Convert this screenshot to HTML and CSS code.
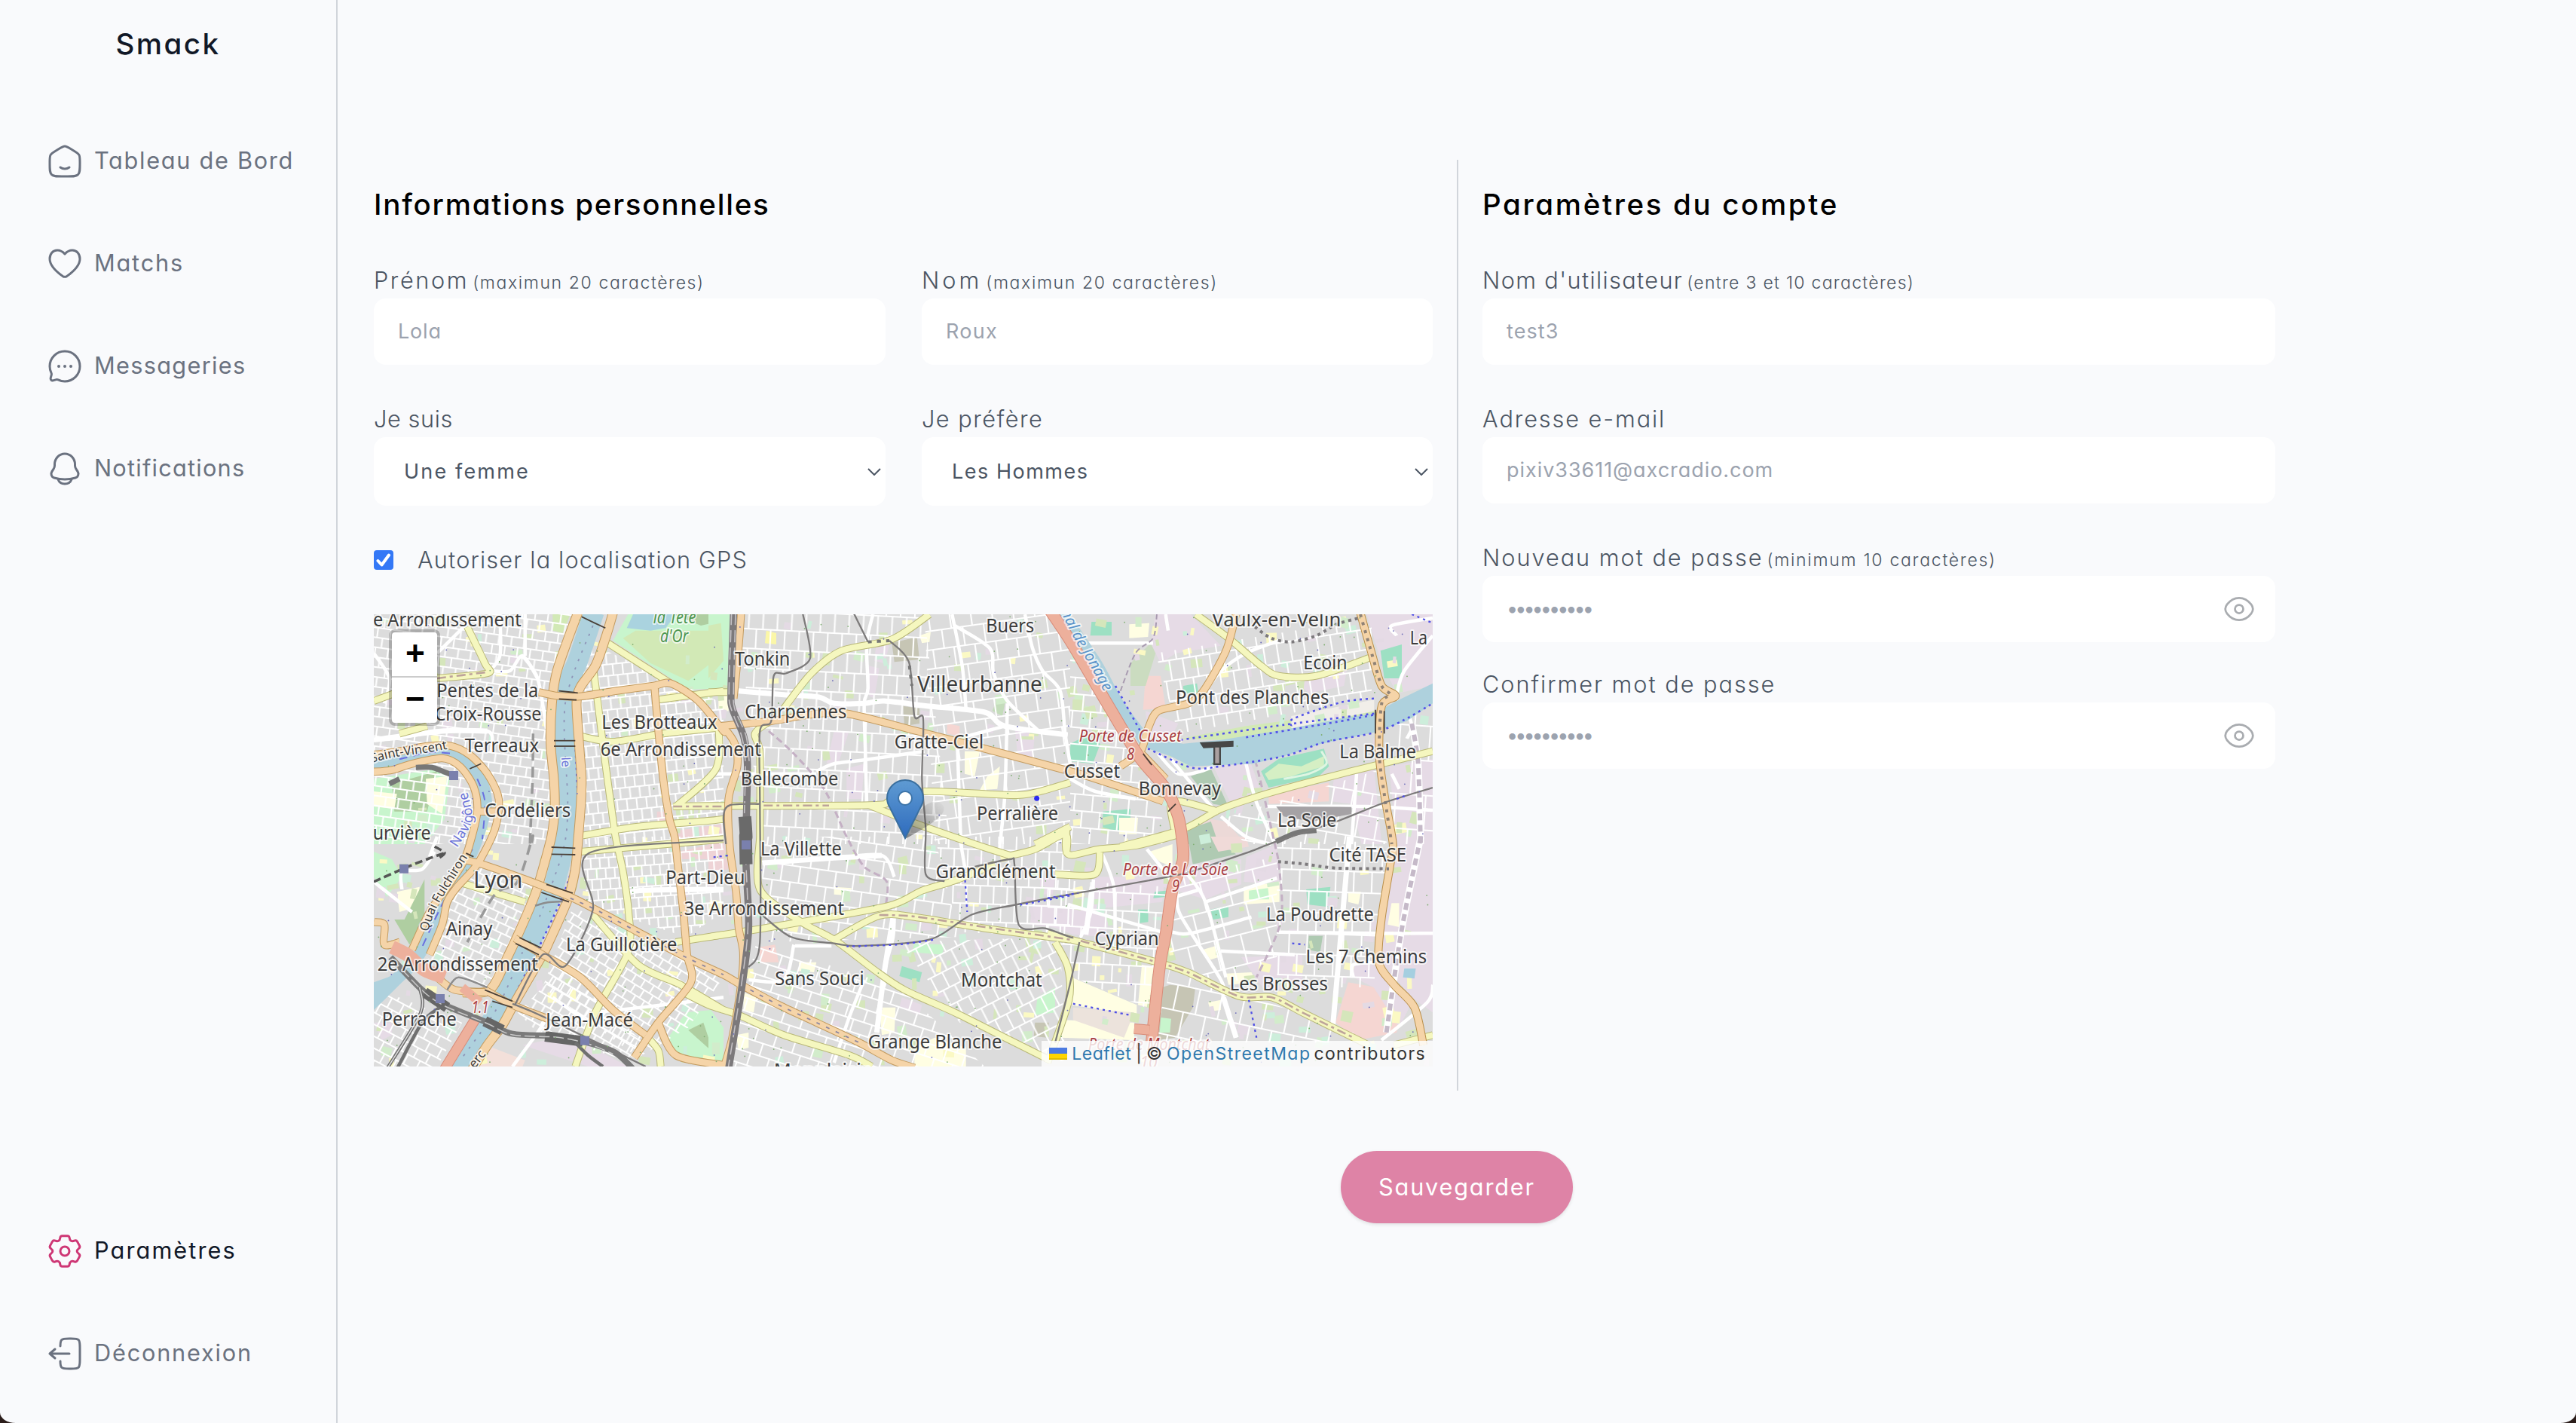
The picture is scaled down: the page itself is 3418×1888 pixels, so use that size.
FILE: index.html
```html
<!DOCTYPE html>
<html lang="fr">
<head>
<meta charset="utf-8">
<title>Smack</title>
<link rel="stylesheet" href="styles.css">
</head>
<body>
<div class="app">
  <aside class="sidebar">
    <div class="logo">Smack</div>
    <nav class="nav">
      <a class="nav-item"><svg class="icon" viewBox="0 0 24 24"><path d="M2 12.2c0-2.29 0-3.43.52-4.38.52-.95 1.47-1.54 3.36-2.71l2-1.24C9.89 2.62 10.89 2 12 2c1.11 0 2.11.62 4.12 1.87l2 1.24c1.9 1.17 2.84 1.76 3.36 2.71.52.95.52 2.09.52 4.38v1.52c0 3.9 0 5.85-1.17 7.07C19.66 22 17.77 22 14 22h-4c-3.77 0-5.66 0-6.83-1.21C2 19.57 2 17.62 2 13.72z"/><path d="M9 16c.85.63 1.89 1 3 1s2.15-.37 3-1"/></svg><span class="t1">Tableau de Bord</span></a>
      <a class="nav-item"><svg class="icon" viewBox="0 0 24 24"><path d="M12 5.5C10.6 3.9 8.8 3 7 3 4.100 3 2 5.400 2 8.700c0 4.900 4.700 8.700 8.600 11.500.9.600 1.900.600 2.800 0C17.300 17.400 22 13.600 22 8.700 22 5.400 19.900 3 17 3c-1.800 0-3.600.9-5 2.500z"/></svg><span class="t2">Matchs</span></a>
      <a class="nav-item"><svg class="icon" viewBox="0 0 24 24"><path d="M12 22c5.520 0 10-4.480 10-10S17.520 2 12 2 2 6.480 2 12c0 1.600.38 3.110 1.040 4.450.18.360.24.770.14 1.150l-.6 2.230c-.26.970.63 1.850 1.590 1.590l2.230-.6c.39-.1.800-.04 1.150.14C8.890 21.620 10.400 22 12 22z"/><path class="dots" d="M8 12h.01M12 12h.01M16 12h.01"/></svg><span class="t3">Messageries</span></a>
      <a class="nav-item"><svg class="icon" viewBox="0 0 24 24"><path d="M18.750 9.710V9C18.750 5.140 15.730 2 12 2S5.250 5.140 5.250 9v.71c0 .840-.24 1.670-.69 2.370L3.450 13.810c-1.010 1.580-.24 3.720 1.520 4.220a25.800 25.800 0 0 0 14.060 0c1.760-.5 2.530-2.640 1.520-4.220l-1.110-1.730a4.400 4.400 0 0 1-.69-2.370z"/><path d="M7.500 19c.65 1.750 2.420 3 4.500 3s3.850-1.250 4.500-3"/></svg><span class="t4">Notifications</span></a>
    </nav>
    <nav class="nav nav-bottom">
      <a class="nav-item active"><svg class="icon" viewBox="-12 -12 24 24"><path d="M-1.700-10.100H1.700C2.600-10.100 3-9.600 3.100-8.800 3.200-7 4.600-6.100 6.300-6.900 7.200-7.300 7.900-7 8.300-6.300L9.700-3.700C10.100-3 9.900-2.200 9.200-1.700 7.700-.6 7.700.6 9.200 1.700 9.900 2.200 10.100 3 9.700 3.700L8.300 6.300C7.900 7 7.200 7.300 6.300 6.900 4.600 6.100 3.200 7 3.100 8.800 3 9.600 2.600 10.100 1.700 10.100H-1.700C-2.600 10.100-3 9.600-3.100 8.800-3.200 7-4.600 6.100-6.300 6.900-7.200 7.300-7.900 7-8.300 6.300L-9.700 3.700C-10.100 3-9.900 2.200-9.200 1.700-7.700.6-7.700-.6-9.200-1.700-9.900-2.200-10.100-3-9.700-3.700L-8.300-6.300C-7.900-7-7.200-7.300-6.300-6.900-4.600-6.100-3.200-7-3.100-8.800-3-9.600-2.600-10.100-1.700-10.100z"/><circle r="3"/></svg><span class="t5">Paramètres</span></a>
      <a class="nav-item"><svg class="icon" viewBox="0 0 24 24"><path d="M9 7c.01-2.170.11-3.350.88-4.120C10.760 2 12.170 2 15 2h1c2.830 0 4.240 0 5.120.88C22 3.760 22 5.170 22 8v8c0 2.830 0 4.240-.88 5.120C20.240 22 18.830 22 16 22h-1c-2.830 0-4.240 0-5.120-.88C9.110 20.350 9.010 19.170 9 17"/><path d="M15 12H2M5.500 9 2 12l3.500 3"/></svg><span class="t6">Déconnexion</span></a>
    </nav>
  </aside>
  <main class="main">
    <div class="panels">
      <section class="panel personal">
        <h2><span class="t7">Informations personnelles</span></h2>
        <div class="pair">
          <label class="field"><span class="label"><span class="t8">Prénom</span><small class="t9">(maximun 20 caractères)</small></span><span class="box"><input class="t10" placeholder="Lola"></span></label>
          <label class="field"><span class="label"><span class="t11">Nom</span><small class="t9">(maximun 20 caractères)</small></span><span class="box"><input class="t12" placeholder="Roux"></span></label>
        </div>
        <div class="pair">
          <div class="field"><span class="label"><span class="t13">Je suis</span></span><span class="box select"><span class="t14">Une femme</span><svg class="chevron" viewBox="0 0 18 10"><path d="M1 1l8 8 8-8"/></svg></span></div>
          <div class="field"><span class="label"><span class="t15">Je préfère</span></span><span class="box select"><span class="t16">Les Hommes</span><svg class="chevron" viewBox="0 0 18 10"><path d="M1 1l8 8 8-8"/></svg></span></div>
        </div>
        <div class="gps"><span class="check"><svg viewBox="0 0 26 26"><path d="M5.500 14l5 5.500L20 6.500"/></svg></span><span class="t17">Autoriser la localisation GPS</span></div>
        <div class="map">
          <svg class="tiles" id="tiles" viewBox="496 815 1405 600"></svg>
          <div class="zoomctl"><span>+</span><span>−</span></div>
          <svg class="marker" viewBox="0 0 50 80"><defs><linearGradient id="pin" x2="0" y2="1"><stop offset="0" stop-color="#5f9bd3"/><stop offset="1" stop-color="#2e6bbd"/></linearGradient></defs><path fill="url(#pin)" stroke="#3a6f9f" stroke-width="2" d="M25 78L5 38C2 33 1 30 1 25a24 24 0 0 1 48 0c0 5-1 8-4 13z"/><circle cx="25" cy="25" r="9" fill="#fff" stroke="#3d74a8" stroke-width="2"/></svg>
          <div class="credit"><svg class="flag" viewBox="0 0 24 16"><path fill="#4c7be1" d="M0 0h24v8H0z"/><path fill="#ffd500" d="M0 8h24v6H0z"/><path fill="#e0bc00" d="M0 14h24v2H0z"/></svg><a class="t18">Leaflet</a><span>|</span><span>©</span><a class="t19">OpenStreetMap</a><span class="t20">contributors</span></div>
        </div>
      </section>
      <section class="panel account">
        <h2><span class="t21">Paramètres du compte</span></h2>
        <label class="field"><span class="label"><span class="t22">Nom d'utilisateur</span><small class="t23">(entre 3 et 10 caractères)</small></span><span class="box"><input class="t24" placeholder="test3"></span></label>
        <label class="field"><span class="label"><span class="t25">Adresse e-mail</span></span><span class="box"><input class="t26" placeholder="pixiv33611@axcradio.com"></span></label>
        <label class="field"><span class="label"><span class="t27">Nouveau mot de passe</span><small class="t28">(minimum 10 caractères)</small></span><span class="box"><input class="bullets" placeholder="••••••••••"><svg class="eye" viewBox="0 0 24 24"><path d="M3.280 15.300C2.420 14.190 2 13.640 2 12s.42-2.190 1.280-3.300C4.970 6.500 7.820 4 12 4s7.030 2.500 8.720 4.700C21.580 9.810 22 10.360 22 12s-.42 2.190-1.280 3.300C19.030 17.500 16.180 20 12 20s-7.030-2.500-8.720-4.700z"/><circle cx="12" cy="12" r="3"/></svg></span></label>
        <label class="field tight"><span class="label"><span class="t29">Confirmer mot de passe</span></span><span class="box"><input class="bullets" placeholder="••••••••••"><svg class="eye" viewBox="0 0 24 24"><path d="M3.280 15.300C2.420 14.190 2 13.640 2 12s.42-2.190 1.280-3.300C4.970 6.500 7.820 4 12 4s7.030 2.500 8.720 4.700C21.580 9.810 22 10.360 22 12s-.42 2.190-1.280 3.300C19.030 17.500 16.180 20 12 20s-7.030-2.500-8.720-4.700z"/><circle cx="12" cy="12" r="3"/></svg></span></label>
      </section>
    </div>
    <button class="save"><span class="t30">Sauvegarder</span></button>
  </main>
</div>
<script src="map.js"></script>
</body>
</html>
```
FILE: styles.css
```css
* { box-sizing: border-box; }
body {
  margin: 0;
  background: #2b1d1a;
  font-family: Inter, "Open Sans", sans-serif;
  font-feature-settings: "cv11";
  color: #4b5563;
}
.app {
  display: flex;
  height: 1888px;
  background: #f9fafc;
  border-radius: 0 0 21px 21px / 0 0 14px 14px;
  overflow: hidden;
}
.sidebar {
  width: 448px;
  flex: none;
  display: flex;
  flex-direction: column;
  border-right: 2px solid #d1d5db;
  padding-bottom: 68px;
}
.logo {
  height: 116px;
  line-height: 116px;
  text-align: center;
  font-size: 38.500px;
  font-weight: 450;
  letter-spacing: 2.500px;
  color: #111827;
  margin-bottom: 74px;
}
.nav { display: flex; flex-direction: column; gap: 88px; padding-left: 62px; }
.nav-bottom { margin-top: auto; }
.nav-item { display: flex; align-items: center; gap: 16px; height: 48px; font-size: 30.700px; color: #6b7280; white-space: nowrap; }
.nav-item span { padding-bottom: 3px; margin-left: -1px; }
.nav-item.active { color: #111827; }
.nav-item.active .icon { stroke: #ce3775; }
.icon { width: 48px; height: 48px; fill: none; stroke: #6b7280; stroke-width: 1.500; stroke-linecap: round; stroke-linejoin: round; }
.icon .dots { stroke-width: 2; }

.main { flex: 1; display: flex; flex-direction: column; align-items: center; padding-top: 212px; }
.panels { display: flex; align-self: stretch; height: 1235px; }
.panel { display: flex; flex-direction: column; padding-top: 32px; }
.personal { width: 1487px; border-right: 2px solid #d1d5db; padding-left: 48px; padding-right: 32px; }
.account { width: 1084px; padding-left: 32px; }
h2 { margin: 0; height: 56px; line-height: 55px; font-size: 38.500px; font-weight: 450; color: #000; white-space: nowrap; }
.pair { display: grid; grid-template-columns: 679px 678px; gap: 48px; }
.field { display: flex; flex-direction: column; margin-top: 48px; }
.field.tight { margin-top: 32px; }
.label { height: 48px; line-height: 48px; font-size: 30.700px; font-weight: 300; white-space: nowrap; }
.label small { font-size: 23px; margin-left: 5px; }
.box { display: flex; align-items: center; height: 88px; background: #fff; border-radius: 16px; padding-left: 32px; font-size: 27px; }
.box input { flex: 1; border: 0; padding: 0 0 2px; outline: 0; background: none; font: inherit; font-feature-settings: inherit; }
.box input::placeholder { color: #9ca3af; opacity: 1; }
.box.select { height: 91px; padding-left: 40px; padding-right: 6px; justify-content: space-between; }
.chevron { width: 18px; height: 10px; fill: none; stroke: #4b5563; stroke-width: 2; }
.eye { width: 44px; height: 44px; margin-right: 26px; fill: none; stroke: #a9acb0; stroke-width: 1.500; }
.gps { display: flex; align-items: center; height: 48px; margin: 48px 0; font-size: 30.700px; font-weight: 300; gap: 32px; white-space: nowrap; }
.gps .t17 { padding-bottom: 2px; }
.check { width: 26px; height: 26px; border-radius: 4px; background: #3478f6; }
.check svg { display: block; fill: none; stroke: #fff; stroke-width: 4; stroke-linecap: round; stroke-linejoin: round; }
.save { margin-top: 80px; width: 308px; height: 96px; border: 0; padding: 0 0 2px; border-radius: 48px; background: #de83a6; color: #fff; font: 400 30.700px Inter, sans-serif; font-feature-settings: inherit; box-shadow: 0 2px 4px rgba(0, 0, 0, .1); }

/* tracking of the individual labels */
.t1 { letter-spacing: 1.700px; }
.t2, .t6, .t30 { letter-spacing: 1.800px; }
.t3 { letter-spacing: 1.310px; }
.t4 { letter-spacing: 1.240px; }
.t5 { letter-spacing: 2.080px; }
.t7 { letter-spacing: 1.780px; }
.t8 { letter-spacing: 2.590px; }
.t9 { letter-spacing: 1.620px; }
.t10 { letter-spacing: .83px; }
.t11 { letter-spacing: 4px; }
.t12 { letter-spacing: 1.290px; }
.t13 { letter-spacing: .6px; }
.t14 { letter-spacing: 2.170px; }
.t15 { letter-spacing: 1.470px; }
.t16 { letter-spacing: 1.510px; }
.t17 { letter-spacing: 1.170px; }
.t18 { letter-spacing: .5px; }
.t19 { letter-spacing: 1.460px; }
.t20 { letter-spacing: 1.360px; margin-left: -2px; }
.t21 { letter-spacing: 2.650px; }
.t22 { letter-spacing: 1.360px; }
.t23 { letter-spacing: 1.290px; }
.t24 { letter-spacing: 1.070px; }
.t25 { letter-spacing: 1.890px; }
.t26 { letter-spacing: .95px; }
.t27, .t29 { letter-spacing: 1.970px; }
.t28 { letter-spacing: 1.730px; }
.bullets { letter-spacing: -4px; }

.map { position: relative; width: 1405px; height: 600px; overflow: hidden; background: #dfdfdf; }
.tiles { display: block; width: 1405px; height: 600px; }
.tiles text { font-family: "Noto Sans", sans-serif; fill: #3c3c3c; stroke: #fff; stroke-opacity: .7; stroke-width: 4px; paint-order: stroke; stroke-linejoin: round; }
.tiles .red { fill: #a93d42; font-style: italic; }
.tiles .green { fill: #4d9650; font-style: italic; }
.tiles .blue { fill: #5b93c9; font-style: italic; }
.tiles .purple { fill: #6a72d8; }
.zoomctl { position: absolute; left: 20px; top: 20px; width: 68px; border: 4px solid rgba(0, 0, 0, .22); border-radius: 8px; background: #fff; background-clip: padding-box; }
.zoomctl span { display: block; height: 58px; padding-left: 2px; text-align: center; color: #000; font: 700 44px/63px "Liberation Mono", monospace; }
.zoomctl span + span { height: 62px; border-top: 2px solid #ccc; }
.marker { position: absolute; left: 680px; top: 219px; width: 50px; height: 80px; }
.credit { position: absolute; right: 0; bottom: 0; height: 34px; display: flex; align-items: center; gap: 6px; padding: 0 9px 0 10px; background: rgba(255, 255, 255, .8); font-size: 23px; color: #333; white-space: nowrap; }
.credit a { color: #2f79ae; }
.flag { width: 24px; height: 16px; }
```
FILE: map.js
```js
// Street map of Lyon: every shape is given in the units of one of six sheets.
const NS = 'http://www.w3.org/2000/svg';
const svg = document.getElementById('tiles');
const sheets = {
  A: [480, 800, 3, 3], B: [940, 800, 3, 3], C: [1420, 800, 3, 3],
  D: [480, 1110, 3, 3], E: [940, 1110, 3, 3], F: [1390, 1110, 2.958, 3]
};
function pt(s, x, y) { const k = sheets[s]; return [k[0] + x / k[2], k[1] + y / k[3]]; }
// "A 1,2 3,4 D 5,6" -> list of map points
function pts(str) {
  let s = 'A'; const out = [];
  for (const w of str.trim().split(/\s+/)) {
    if (w.length === 1) s = w; else { const [x, y] = w.split(',').map(Number); out.push(pt(s, x, y)); }
  }
  return out;
}
function el(name, attrs, parent = svg) {
  const e = document.createElementNS(NS, name);
  for (const k in attrs) e.setAttribute(k, attrs[k]);
  parent.appendChild(e); return e;
}
const f = n => n.toFixed(1);
function smooth(p) {
  let d = `M${f(p[0][0])} ${f(p[0][1])}`;
  for (let i = 0; i < p.length - 1; i++) {
    const a = p[i - 1] || p[i], b = p[i], c = p[i + 1], e = p[i + 2] || c, t = 7;
    d += `C${f(b[0] + (c[0] - a[0]) / t)} ${f(b[1] + (c[1] - a[1]) / t)} ${f(c[0] - (e[0] - b[0]) / t)} ${f(c[1] - (e[1] - b[1]) / t)} ${f(c[0])} ${f(c[1])}`;
  }
  return d;
}
function lines(list, color, width, extra = {}) {
  for (const l of list) el('path', { d: smooth(pts(l)), fill: 'none', stroke: color, 'stroke-width': width, 'stroke-linejoin': 'round', ...extra });
}
function area(str, fill, extra = {}) { el('polygon', { points: pts(str).map(p => p.map(f).join()).join(' '), fill, ...extra }); }

let seed = 7;
const rnd = () => (seed = (seed * 16807) % 2147483647) / 2147483647;

// background and land use
el('rect', { x: 496, y: 815, width: 1405, height: 600, fill: '#dcdcdc' });
const mauve = '#e6dbe6', park = '#c8f5cd', grass = '#d2e9b6', wood = '#afcea1', school = '#fffee3', pitch = '#9de0c3', pink = '#f5d6d2', brown = '#c6c5b4';
[
  ['A 1000,150 1060,45 1440,45 1440,340 1300,345', park], ['A 1040,140 1090,110 1440,110 1440,200 1300,310 1150,240', grass],
  ['A 1240,45 1440,45 1440,70 1350,90', wood], ['A 1055,100 1080,45 1250,45 1210,100 1150,110', '#aad3df'],
  ['B 0,45 85,45 75,340 0,345', park], ['B 0,90 50,80 60,230 0,300', grass],
  ['A 760,45 830,45 800,120 760,110', grass], ['A 48,700 300,660 350,700 330,860 250,960 48,960', park],
  ['A 120,720 300,670 260,830 130,830', wood], ['A 255,700 340,690 320,840 260,800', school], ['A 48,750 140,760 130,820 48,810', school],
  ['D 48,60 120,90 160,160 100,240 48,160', park], ['D 140,220 230,200 220,280 150,300', school], ['D 170,330 250,170 250,330 190,430 130,330', wood],
  ['D 1220,800 1290,700 1390,690 1440,760 1440,900 1260,870', park], ['D 1300,770 1360,740 1400,860', wood],
  ['D 640,830 780,800 920,840 1060,915 900,915', mauve], ['D 470,880 520,840 650,890 640,915 450,915', '#f3e0da'],
  ['D 48,740 120,740 120,790 80,810', mauve], ['D 1260,60 1440,20 1440,130 1390,120 1380,90 1270,90', '#eed3d6'],
  ['A 1260,905 1440,880 1440,920 1260,940', '#eed3d6'], ['A 1175,830 1210,830 1210,880 1175,870', '#eed3d6'],
  ['E 0,20 60,10 80,130 0,140', '#eed3d6'], ['B 730,160 830,135 840,225 740,235', brown], ['B 775,410 840,420 840,480 780,490', brown],
  ['B 1110,690 1160,650 1150,740 1080,745', school], ['B 1020,590 1080,590 1060,690 1020,680', school], ['B 1220,500 1300,510 1290,620 1230,600', mauve],
  ['B 500,510 560,510 520,630 470,640', mauve], ['B 550,660 620,640 610,780 550,780', mauve], ['B 640,250 680,260 660,380 640,370', mauve], ['B 670,150 720,170 700,240 660,230', mauve],
  ['B 950,480 1000,490 1000,530 950,520', pink], ['B 840,130 885,115 880,155 850,160', school], ['B 1150,380 1180,400 1170,450 1130,430', '#c4dcbb'],
  ['B 230,110 270,120 270,165 225,160', '#fbf7a8'], ['B 40,370 80,370 80,430 40,430', school],
  ['C 340,45 480,45 600,170 420,200 360,240 320,160', mauve], ['C 1180,45 1443,45 1443,330 1300,360 1240,240', mauve],
  ['C 900,310 1100,270 1090,330 950,360', mauve], ['C 300,290 360,290 380,420 290,425', pink], ['C 300,430 430,480 400,540 310,530', mauve],
  ['C 240,240 320,160 340,200 300,330 240,330', '#cbdcc0'], ['C 85,75 165,75 165,130 80,130', pitch], ['C 235,85 315,80 310,135 235,140', school],
  ['C 450,330 505,320 510,360 450,360', pitch], ['C 1235,190 1320,165 1320,300 1250,300', pitch], ['C 440,540 700,490 1000,450 1200,420 1220,440 900,500 600,545', grass],
  ['C 480,690 560,660 630,810 570,800', '#afcab2'], ['C 570,650 720,640 760,750 640,800', mauve], ['C 790,770 950,730 1030,715 1030,790 790,800', pink],
  ['C 1050,690 1210,660 1240,960 1160,960 1120,800 1040,790', mauve], ['C 1270,650 1443,620 1443,960 1300,960', mauve],
  ['C 130,830 240,820 240,910 130,900', pitch], ['C 195,855 270,855 265,920 195,920', school], ['C 0,560 60,530 120,560 90,640 0,630', pitch],
  ['C 880,450 1210,385 1210,430 880,500', '#f1eee9'], ['C 470,910 560,860 620,870 700,960 470,960', '#ecd9d7'], ['C 470,900 560,870 590,960 450,960', '#afcab2'],
  ['F 550,0 640,0 740,70 570,110', '#afcab2'], ['F 640,0 780,0 790,40 670,60', '#f0dad8'], ['F 420,190 480,120 760,90 760,190 620,250', mauve],
  ['F 180,160 460,160 450,260 160,290', mauve], ['F 400,60 490,30 490,120 440,100', school], ['F 0,270 160,290 240,320 230,400 100,390 0,350', mauve],
  ['F 780,80 900,30 910,190 770,180', mauve], ['F 770,200 910,180 910,260 770,270', school], ['F 790,215 865,205 870,250 790,250', park],
  ['F 1015,210 1110,200 1100,280 1020,270', pitch], ['F 1180,220 1230,220 1220,270 1180,260', school], ['F 1370,0 1512,0 1512,700 1430,640 1310,500 1320,330', mauve],
  ['F 1350,265 1380,265 1380,360 1335,350', school], ['F 760,480 1000,470 1000,610 850,610', mauve], ['F 1180,580 1290,600 1380,700 1370,780 1220,810 1130,740', pink],
  ['F 1190,510 1290,510 1430,660 1380,760 1280,600 1200,560', mauve], ['F 1025,395 1080,395 1070,460 1020,450', '#afcab2'],
  ['F 420,220 465,215 460,240 415,245', pitch], ['F 355,290 395,290 395,340 355,345', pitch], ['F 640,290 710,275 710,320 650,330', pitch],
  ['F 95,560 350,670 350,710 90,670', school], ['F 370,510 425,520 400,680 355,670', school], ['F 60,730 340,740 340,810 50,800', school],
  ['F 480,590 580,600 570,680 500,800 430,810 450,600', brown], ['F 100,680 340,700 300,800 100,730', '#ece3dc'], ['F 445,720 485,725 480,780 440,780', park],
  ['F 700,545 800,540 820,580 710,590', school], ['F 610,450 660,435 670,480 640,490', school], ['F 630,660 680,650 680,690 640,695', school],
  ['E 820,840 900,800 1025,840 1025,915 820,915', school], ['E 680,680 745,680 740,780 690,790', school], ['E 770,640 850,670 840,710 760,680', mauve],
  ['E 770,515 850,540 840,580 760,555', pitch], ['E 820,425 940,430 930,470 810,460', park], ['E 1310,640 1380,600 1380,700 1300,710', park], ['E 1300,740 1355,740 1350,800 1295,795', brown],
  ['E 200,440 265,430 280,500 210,500', pink], ['E 140,620 190,640 180,700 140,690', school], ['E 360,500 430,500 420,540 360,535', school], ['E 500,200 570,205 560,235 500,230', school],
  ['E 110,790 160,780 160,840 120,850', school], ['E 0,740 60,800 50,900 0,900', park], ['E 1290,270 1360,270 1440,300 1440,370 1280,350', mauve], ['E 1320,160 1380,170 1370,230 1320,230', mauve]
].forEach(a => area(a[0], a[1]));

// scattered gardens, yards and squares
const tones = ['#d5e6bb', '#d5e6bb', '#d2eccb', '#fbf9c4', '#e4dae4', '#cdeedb'];
for (let i = 0; i < 640; i++) {
  const x = 500 + rnd() * 1390, y = 818 + rnd() * 590, w = 4 + rnd() * 12, h = 4 + rnd() * 12;
  el('rect', { x: f(x), y: f(y), width: f(w), height: f(h), fill: tones[i % 6], transform: `rotate(${f(rnd() * 30 - 15)} ${f(x)} ${f(y)})` });
}

// side streets, one grid per district
const defs = el('defs', {});
[
  ['A 48,45 850,45 740,400 760,800 740,960 48,960', 8, 17, 13], ['A 860,140 1440,400 1440,960 880,960', -6, 13, 15],
  ['D 440,110 700,190 500,610 240,470', 25, 15, 12], ['D 860,0 1440,0 1440,300 1290,400 900,270', -4, 12, 14], ['D 840,280 1440,560 1300,760 1100,880 720,600', 32, 14, 12],
  ['D 620,700 800,520 1100,800 1080,900 700,780', 30, 13, 13], ['D 48,600 400,740 300,915 48,915', 28, 18, 14],
  ['B 120,45 860,45 960,960 210,960', 3, 19, 26], ['B 860,45 1440,45 1440,960 900,960', -8, 28, 25],
  ['E 210,0 900,0 1000,400 220,420', 8, 24, 22], ['E 190,420 760,600 1100,915 90,915', 18, 26, 17], ['E 760,420 1400,400 1420,900 1000,740', -27, 17, 22], ['E 900,0 1440,0 1440,400 1000,380', 2, 18, 24],
  ['C 0,170 290,620 400,960 0,960', 5, 24, 22], ['C 340,200 1200,60 1200,380 430,520', -9, 18, 27], ['C 600,860 1240,660 1260,960 700,960', 10, 26, 30], ['C 1260,430 1443,380 1443,960 1280,960', 4, 40, 46],
  ['F 0,170 480,200 430,700 100,560 0,400', 3, 22, 24], ['F 500,160 900,80 900,480 700,600 480,480', -14, 36, 40], ['F 900,20 1340,20 1280,600 900,600', 2, 24, 28], ['F 480,520 1200,780 1200,820 420,820', 12, 30, 34]
].forEach((g, i) => {
  const p = el('pattern', { id: 'grid' + i, width: g[2], height: g[3] * 2, patternUnits: 'userSpaceOnUse', patternTransform: `rotate(${g[1]})` }, defs);
  el('path', { d: `M0 1H${g[2]}M0 ${g[3] + 1}H${g[2]}M1 0V${g[3]}M${g[2] / 2} ${g[3]}V${g[3] * 2}`, stroke: '#fff', 'stroke-width': 2.100, fill: 'none' }, p);
  area(g[0], `url(#grid${i})`);
});

// secondary streets
lines([
  'A 48,545 130,540 320,510 500,510 520,560', 'A 550,45 550,210 500,280', 'A 300,200 420,80 440,45', 'A 48,200 110,300 90,400', 'A 520,270 590,270 640,210 700,300', 'A 650,45 650,210', 'A 640,210 700,300 735,500',
  'B 120,350 300,365 440,375 500,400 620,400 700,390 870,410 1100,435 1180,490 1430,525', 'B 655,45 630,160 635,340 620,400 625,600 630,800', 'B 970,45 1010,250 1025,420', 'B 980,90 1120,180 1135,280 1190,390 1310,505', 'B 1260,45 1290,180 1330,270 1400,350 1420,520 1440,640', 'B 430,670 500,640 620,625 860,590', 'B 1180,490 1030,530', 'B 1190,400 1180,760 1160,960', 'B 990,540 1005,960', 'B 0,680 430,680',
  'E 215,105 500,85 690,75 740,160', 'E 740,290 735,400 700,540 670,780', 'E 340,430 300,570 160,570', 'E 620,570 560,720 500,900', 'E 345,435 490,435', 'E 1160,0 1160,70',
  'E 1000,0 1020,120', 'D 1060,240 1100,215 1440,210', 'D 930,700 1200,670 1440,640', 'D 760,640 900,740', 'D 600,915 700,780 750,700', 'D 48,180 200,300', 'D 270,80 300,0', 'D 290,60 240,130 160,140 160,210',
  'C 0,700 100,750 260,780', 'C 30,160 330,160', 'C 380,45 390,110', 'C 600,850 700,930 800,960', 'C 700,640 740,790 810,950', 'C 1300,390 1330,410 1360,490 1340,540', 'C 1140,680 1120,960', 'C 780,810 1180,810 1443,825', 'C 1300,360 1330,270 1443,130', 'C 540,350 600,270 700,200 830,150', 'C 350,600 430,680 520,670 570,650', 'C 400,620 500,740 580,830', 'C 1443,60 1280,90 1300,130', 'C 1280,680 1310,740',
  'F 180,170 170,300 130,400', 'F 215,70 260,200 265,400', 'F 390,50 500,200 520,310 680,570 690,640 740,800', 'F 540,140 620,260 700,560', 'F 490,380 560,385 800,320', 'F 680,455 970,470', 'F 900,380 1290,385 1512,385', 'F 1185,0 1170,200 1140,520 1120,750', 'F 500,240 600,210', 'F 620,260 900,165', 'F 1300,500 1200,510 1200,560', 'F 1512,590 1490,660 1310,810', 'F 80,270 450,380'
], '#fff', 4.500);
lines(['B 120,350 300,365 440,375 500,400 620,400 700,390 870,410 1100,435 1180,490 1430,525', 'F 175,200 150,390', 'E 215,105 500,85 690,75', 'E 740,290 700,540 670,780', 'F 690,640 740,800', 'F 1185,0 1140,520 1120,750', 'D 1060,240 1100,215 1440,210', 'A 48,545 320,510 500,510'], '#fff', 7);

// administrative limits
lines(['B 240,510 340,600 460,740 550,930 E 620,120 710,180 700,310', 'C 700,550 740,640 810,940 F 910,130 915,340 820,560'], '#c4b0c4', 3, { 'stroke-dasharray': '9 5' });
lines(['C 1360,480 1385,640 1395,960', 'F 1465,0 1390,370 1330,780'], '#fff', 9);
lines(['C 1360,480 1385,640 1395,960', 'F 1465,0 1390,370 1330,780'], '#c5b9c8', 6, { 'stroke-dasharray': '9 6' });

// water
const water = '#aed1dd';
lines(['A 925,35 860,230 815,345 810,540 820,700 818,880 D 808,0 795,80 755,230 680,400 600,570 560,660 500,760 420,860 370,930'], water, 27);
lines(['A 40,640 150,625 270,597 370,605 430,650 480,720 495,800 480,870 D 455,20 420,100 350,220 310,300 240,450 190,520 120,580 40,640'], water, 16);
area('D 48,580 160,540 170,570 100,640 48,690', water);
lines(['C -60,0 100,235 190,400 270,510 300,560'], water, 15);
area('C 270,530 450,560 600,545 850,505 1080,460 1210,440 1300,390 1443,320 1443,400 1340,470 1210,515 1000,560 850,610 730,640 600,645 480,650 400,610 310,580', water);
area('F 1400,525 1445,525 1440,565 1395,560', '#a5cfe0');
lines(['C 440,545 850,485 1210,440', 'C 310,580 480,655 600,650 850,610 1010,555 1215,515 1330,465 1443,400', 'C 700,535 1080,470 1210,445', 'C 880,490 890,460 1080,395 1210,380', 'C 180,330 290,530', 'A 850,560 860,800 850,960 D 830,150 790,260 710,430 600,650'], '#5252e8', 2.600, { 'stroke-dasharray': '3 5' });
lines(['A 920,90 810,400 820,800 D 800,60 700,340', 'D 640,460 540,680 400,880'], '#8e95b8', 1.800, { 'stroke-dasharray': '3 9' });
lines(['A 150,622 270,595 370,600', 'A 460,700 490,790 480,940', 'D 440,50 320,270 240,440'], '#6a70e0', 2, { 'stroke-dasharray': '11 8' });
area('C 760,670 830,620 1010,580 1030,650 990,690 790,735', pitch);
area('C 775,680 830,640 920,650 1010,610 1010,650 880,690 790,705', '#d5efc4');
lines(['C 850,700 950,680 1020,640 1000,590'], '#dff5e2', 3);
area('C 515,555 650,548 650,572 530,578', '#474747');
area('C 570,570 600,570 600,645 570,645', '#474747'); area('C 577,575 593,575 593,638 577,638', '#aaa0a0');

function roads(list, casing, fill, w) { lines(list, casing, w + 2); lines(list, fill, w); }
roads([
  'A 420,95 490,240 500,280 300,300', 'A 48,390 130,360', 'A 980,160 1230,320', 'A 920,250 940,400 970,640 1000,860 D 1010,0 1040,140 1062,300 1060,460 930,700 850,915', 'A 870,530 1000,552 1200,520 1440,495', 'A 1180,385 1440,350', 'A 880,925 1100,890 1370,868 1440,860', 'A 1420,480 1410,660 1250,810', 'A 1240,810 B 0,808 640,805 720,790 860,750 1200,765 1300,755 1440,715', 'A 150,520 260,490',
  'B 880,45 730,145 530,190 410,280 300,420', 'B 0,355 75,355', 'B 640,805 830,880 1060,960 E 1200,75', 'B 245,470 185,520 205,600 205,900 E 205,0 205,210 370,340 500,410 660,530 780,610 980,700 1200,810 1360,890', 'B 1300,960 1440,890', 'E 1190,78 1300,50 1420,-10 1425,70',
  'E 0,400 370,340 720,275 850,215 980,175 1140,110', 'E 500,410 680,315 820,320 1100,365 1440,410', 'E -100,620 0,670 120,710 300,790 560,870 650,915', 'E 1380,420 1430,520 1435,650 1350,900',
  'C 500,45 630,140 760,250 830,290 980,290 1200,215', 'C 200,970 450,900 600,820 780,760 1000,700 1240,640 1443,590', 'C 415,900 400,810 440,790 590,830',
  'D 400,185 650,260', 'D 870,60 1100,40 1440,10', 'D 920,310 1100,510 1270,590 1440,690', 'D 1250,420 1440,390', 'D 1130,790 1180,850 1190,915',
  'F 75,-40 80,70 200,50 350,35 520,-10', 'F 205,60 185,150 30,150', 'F 0,385 130,420 430,500 550,540 750,635 880,640 1000,700 1200,800 1260,830', 'F 1360,830 1512,790'
], '#b9b878', '#f5f7bf', 8);
lines(['E 680,312 820,318 1100,360 1440,410', 'F 130,415 430,500 550,540 750,635 880,640 1000,700 1200,800', 'B 220,806 480,806', 'A 1240,810 1440,810', 'A 300,300 500,275'], '#bda39a', 2.600, { 'stroke-dasharray': '12 5 4 5' });

roads([
  'A 860,40 815,160 775,280 757,400 752,560 765,700 768,820 D 755,0 715,150 690,230 640,350 580,480 510,610 400,620', 'A 1000,40 970,140 930,250 870,335 855,400 865,560 875,700 872,800 D 862,0 850,130 820,250 745,420 720,470 615,650 560,750 500,830 440,925'
], '#c39b5f', '#f5d4a8', 11);
roads([
  'A 40,672 120,665 200,640 320,618 390,650 445,730 460,830 430,960 D 400,110 340,200 270,300 200,450', 'A 40,605 150,590 260,570 350,568 430,605 500,680 545,780 530,900 D 460,110 380,200 340,260 320,350 270,470',
  'A 705,355 780,370 870,372 1010,350 1160,330 1230,320 1340,390 1440,510 B 60,495 105,560 115,650 80,780 E 85,40 110,220 120,360 138,460 130,590 95,800 60,925', 'A 1165,330 1180,500 1200,700 1225,860 D 1245,0 1260,130 1280,300 1295,470 1310,580 1180,740 1085,880', 'D 1180,740 1250,870 1440,910',
  'D 400,90 480,110 650,170 830,240 930,290 1100,380 1290,480 1440,550 E 130,590 280,670 430,740 600,820 730,890 820,920', 'D 610,405 720,470 870,560 1000,690 1130,790', 'D 490,610 600,670 740,725', 'D 48,340 90,350 90,430 150,420',
  'B 130,40 118,200 100,380', 'B 45,490 250,470 400,445 550,440 830,510 1100,580 1440,670 C 70,690 270,755 370,790', 'C 660,45 620,190 530,350 470,400 350,430 310,500 280,590 200,650', 'C 275,590 380,700', 'D 300,560 370,610 500,620', 'A 450,830 540,830'
], '#c39b5f', '#f5d4a8', 8.500);
roads(['C 1155,40 1200,200 1240,330 1295,370 1240,410 1230,600 1250,760 1285,960 F 1345,110 1310,330 1300,500 1360,590 1440,680 1475,830'], '#b98f4a', '#f5d4a8', 9);
lines(['C 1155,45 1200,200 1240,330 1275,365 1240,400 1230,600 1250,760 1280,960'], '#8f8276', 4, { 'stroke-dasharray': '4 7' });
lines(['D 830,245 930,290 1100,380 1290,480 1440,550', 'E 130,590 280,670 430,740 600,820'], '#8c86a0', 1.800, { 'stroke-dasharray': '5 9' });
roads(['B 1340,0 C 0,150 100,320 200,490 280,620 380,740 430,850 F 530,30 530,100 490,210 465,380 440,520 408,820'], '#d88b78', '#edb09c', 14);
roads(['F 340,765 400,770', 'D 450,730 330,925'], '#d88b78', '#edb09c', 12);
lines(['D 120,440 180,470 250,530 330,560'], '#edb09c', 18); lines(['D 400,600 470,660'], '#edb09c', 12);
lines(['A 875,55 970,100', 'A 765,548 850,548', 'A 765,570 850,570', 'A 785,350 860,358', 'A 785,382 855,386', 'D 755,42 850,46', 'D 755,70 850,72', 'D 735,190 840,225', 'D 715,222 825,260', 'D 628,402 715,443', 'D 612,425 705,470', 'D 415,66 445,80', 'D 490,610 600,655', 'D 520,655 600,680', 'C 1215,425 1215,520', 'C 1250,430 1250,520', 'A 430,660 475,640', 'C 290,600 325,645', 'C 390,830 420,800'], '#4a4038', 1.800);

// railways
lines(['B 100,40 90,350 95,420 140,530 155,640 150,900 E 150,0 150,120 160,370 130,620 80,925'], '#7c797b', 9.500);
lines(['B 92,40 82,350 90,420 132,530 147,640 142,900 E 150,120 157,370 127,620 78,925', 'B 108,40 100,350 104,420 150,530 163,640'], '#c4c1c4', 1.600, { 'stroke-dasharray': '16 7' });
lines(['B 145,850 150,930 E 148,0 150,110'], '#6a6a6a', 17);
lines(['D 115,480 240,610 330,670 500,740 600,785 780,795 900,820 1010,860 1080,925'], '#7a7a7a', 8);
lines(['D 250,620 340,680', 'D 490,735 560,770', 'D 730,795 880,815'], '#666', 14);
lines(['D 120,485 240,612 330,674 500,744 600,789 780,799 900,824 1000,865'], '#c9c9c9', 1.500, { 'stroke-dasharray': '14 5' });
lines(['D 230,600 235,700 100,925', 'D 310,680 240,740 140,925', 'D 850,820 900,870 960,915'], '#707070', 4.500);
lines(['D 230,600 235,700 100,925'], '#ddd', 1.500);
lines(['A 215,655 280,655 360,685', 'A 110,720 150,700', 'C 820,950 900,915 980,905'], '#777', 7);
area('C 820,810 1120,812 1120,840 960,870 850,850', '#a5a2a5');
lines(['A 682,520 680,700 670,960 D 680,0 620,180 530,230 420,420'], '#999', 3.500, { 'stroke-dasharray': '14 8' });
lines(['D 48,180 170,125 260,90 330,65', 'D 290,40 330,65 300,90'], '#555', 3.500, { 'stroke-dasharray': '10 5' });
lines(['D 690,275 740,262 800,258', 'D 340,610 385,560 500,600'], '#8c8c8c', 2.500);
lines([
  'B 375,40 405,220 310,280 260,290 250,470 205,510 205,800 E 205,420 160,520', 'B 70,960 60,850 85,805 205,800', 'B 578,40 635,155', 'B 720,150 798,235 820,450 855,460 850,700 865,900 E 865,150 940,178', 'E 1060,120 1200,90 1218,110 1235,350 1340,365 1440,400 F 100,400',
  'E 200,300 330,400 500,425 600,435 880,410 1050,310 1230,270 1440,230 F 500,155 620,120 780,65 C 820,950 1060,870 1250,795 1443,735', 'D 1440,15 905,65 920,290 810,515 720,470 610,670', 'D 600,665 730,720 1130,915', 'F 125,420 85,600 30,820'
], '#7c7a7a', 2.300);
lines(['B 635,155 720,150', 'B 800,250 810,330'], '#777', 4, { 'stroke-dasharray': '5 7' });
lines(['C 735,95 800,140 880,155 980,130 1060,85 1150,60', 'F 905,100 1000,108 1130,125 1340,128'], '#7d7a7d', 4, { 'stroke-dasharray': '4 5' });
lines(['C 345,45 330,140 260,200 200,350'], '#a89bb0', 2, { 'stroke-dasharray': '7 4' });
lines(['E 550,437 750,430 900,410', 'E 1240,272 1440,235', 'E 1020,150 1030,300', 'F 0,245 120,225', 'F 100,665 330,712', 'F 790,650 820,800', 'C 1300,780 1340,765', 'C 1360,45 1443,80', 'F 960,425 1010,430', 'E 20,82 80,75'], '#4f4fe5', 2.300, { 'stroke-dasharray': '3 5' });
['A 366,687', 'D 168,128', 'D 312,645', 'D 888,812', 'E 150,33'].forEach(s => { const p = pts(s)[0]; el('rect', { x: p[0] - 6, y: p[1] - 6, width: 12, height: 12, fill: '#7a80ad' }); });
{ const p = pts('B 1307,778')[0]; el('circle', { cx: p[0], cy: p[1], r: 3.500, fill: '#2d2df0' }); }
for (let i = 0; i < 420; i++) el('circle', { cx: f(500 + rnd() * 1395), cy: f(818 + rnd() * 592), r: 0.900, fill: i % 3 ? '#7fae72' : '#6a6ab8' });

// shadow cast by the marker
{
  const g = el('linearGradient', { id: 'shade', x1: 0, y1: 1, x2: 1, y2: 0 }, defs);
  el('stop', { offset: 0, 'stop-color': '#333', 'stop-opacity': .55 }, g);
  el('stop', { offset: 1, 'stop-color': '#333', 'stop-opacity': 0 }, g);
  el('path', { d: 'M1201 1113L1218 1080C1226 1064 1246 1058 1252 1070 1256 1080 1240 1092 1201 1113z', fill: 'url(#shade)' });
}

// place names: sheet, x start, x end, baseline, text, size, class
function name(s, x0, x1, y, text, size = 25, cls = '', end = s) {
  const a = pt(s, x0, y), b = pt(end, x1, y);
  el('text', { x: f(a[0]), y: f(a[1]), 'font-size': size, textLength: f(b[0] - a[0]), lengthAdjust: 'spacingAndGlyphs', class: cls }).textContent = text;
}
[
  ['A', 45, 635, 93, 'e Arrondissement'], ['A', 298, 703, 374, 'Pentes de la'], ['A', 290, 715, 468, 'Croix-Rousse'], ['A', 410, 705, 594, 'Terreaux'], ['A', 490, 832, 852, 'Cordeliers'], ['A', 44, 275, 942, 'urvière'],
  ['A', 955, 1415, 500, 'Les Brotteaux'], ['A', 950, 210, 610, '6e Arrondissement', 25, '', 'B'], ['A', 1160, 1330, 80, 'la Tête', 24, 'green'], ['A', 1188, 1300, 155, "d'Or", 24, 'green'],
  ['B', 832, 1328, 354, 'Villeurbanne', 29], ['B', 1105, 1297, 117, 'Buers'], ['B', 105, 325, 248, 'Tonkin'], ['B', 145, 550, 460, 'Charpennes'], ['B', 740, 1095, 578, 'Gratte-Ciel'], ['B', 128, 517, 726, 'Bellecombe'], ['B', 1068, 1392, 863, 'Perralière'],
  ['C', 565, 1078, 93, 'Vaulx-en-Velin'], ['C', 1352, 1422, 165, 'La'], ['C', 928, 1103, 265, 'Ecoin'], ['C', 420, 1030, 403, 'Pont des Planches'], ['C', 1072, 1377, 617, 'La Balme'], ['C', 272, 600, 765, 'Bonnevay'], ['C', 825, 1060, 890, 'La Soie'],
  ['C', 35, 443, 553, 'Porte de Cusset', 22, 'red'], ['C', 225, 255, 625, '8', 22, 'red'], ['C', -25, 198, 697, 'Cusset'],
  ['D', 445, 640, 205, 'Lyon', 31], ['D', 335, 520, 393, 'Ainay'], ['D', 813, 1255, 455, 'La Guillotière'], ['D', 62, 702, 533, '2e Arrondissement'], ['D', 80, 377, 753, 'Perrache'], ['D', 733, 1080, 757, 'Jean-Macé'], ['D', 437, 505, 703, '1.1', 22, 'red'],
  ['D', 1210, 145, 190, 'Part-Dieu', 25, '', 'E'], ['D', 1283, 540, 311, '3e Arrondissement', 25, '', 'E'], ['E', 207, 530, 76, 'La Villette'], ['E', 905, 1382, 165, 'Grandclément'], ['E', 265, 620, 590, 'Sans Souci'], ['E', 1005, 1328, 597, 'Montchat'], ['E', 635, 1168, 843, 'Grange Blanche'], ['E', 260, 640, 957, 'Monplaisir'],
  ['F', 1105, 1408, 100, 'Cité TASE'], ['F', 295, 710, 152, 'Porte de La Soie', 22, 'red'], ['F', 488, 518, 220, '9', 22, 'red'], ['F', 858, 1280, 337, 'La Poudrette'], ['F', 185, 437, 433, 'Cyprian'], ['F', 1013, 1488, 503, 'Les 7 Chemins'], ['F', 715, 1100, 613, 'Les Brosses'], ['F', 160, 637, 850, 'Porte de Montchat', 22, 'red'], ['F', 362, 430, 920, '10', 22, 'red']
].forEach(n => name(...n));
// street and river names set along their course
function along(str, text, size, cls) {
  const id = 'way-' + text.replace(/\W/g, '');
  el('path', { id, d: smooth(pts(str)), fill: 'none' });
  const t = el('text', { 'font-size': size, class: cls });
  const tp = el('textPath', { href: '#' + id }, t); tp.textContent = text;
}
along('A 40,635 140,612 250,597 345,580', 'Saint-Vincent', 16.500, '');
along('D 262,380 300,280 360,180 430,70', 'Quai Fulchiron', 16.500, '');
along('C -65,-20 20,150 90,270 160,400', 'canal de Jonage', 20, 'blue');
along('A 380,975 440,860 410,720', 'Navigône', 18, 'purple');
along('A 795,615 800,700', 'le', 16, 'purple');
along('D 450,925 500,860', 'erc', 17, '');
```
